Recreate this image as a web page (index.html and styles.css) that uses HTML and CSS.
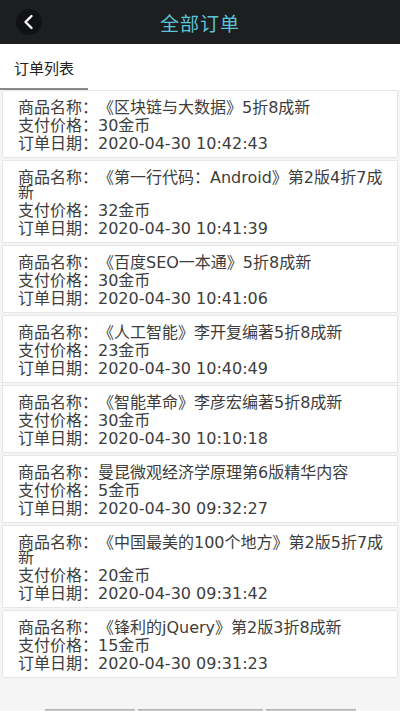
FILE: index.html
```html
<!DOCTYPE html>
<html lang="zh-CN">
<head>
	<meta charset="UTF-8" />
	<meta name="viewport" content="width=device-width, initial-scale=1.0" />
	<title>全部订单</title>
	<link rel="stylesheet" href="styles.css">
</head>
<body>
	<header class="topbar">
		<button class="back" aria-label="返回">
			<svg width="14" height="16" viewBox="0 0 14 16"><path d="M9.5 2 L3.5 8 L9.5 14" fill="none" stroke="#fff" stroke-width="2.4" stroke-linecap="round" stroke-linejoin="round"/></svg>
		</button>
		<h1>全部订单</h1>
	</header>

	<nav class="tabs">
		<span class="tab active">订单列表</span>
	</nav>

	<main class="orders">
		<div class="order">
			<p>商品名称：《区块链与大数据》5折8成新</p>
			<p>支付价格：30金币</p>
			<p>订单日期：2020-04-30 10:42:43</p>
		</div>
		<div class="order">
			<p>商品名称：《第一行代码：Android》第2版4折7成新</p>
			<p>支付价格：32金币</p>
			<p>订单日期：2020-04-30 10:41:39</p>
		</div>
		<div class="order">
			<p>商品名称：《百度SEO一本通》5折8成新</p>
			<p>支付价格：30金币</p>
			<p>订单日期：2020-04-30 10:41:06</p>
		</div>
		<div class="order">
			<p>商品名称：《人工智能》李开复编著5折8成新</p>
			<p>支付价格：23金币</p>
			<p>订单日期：2020-04-30 10:40:49</p>
		</div>
		<div class="order">
			<p>商品名称：《智能革命》李彦宏编著5折8成新</p>
			<p>支付价格：30金币</p>
			<p>订单日期：2020-04-30 10:10:18</p>
		</div>
		<div class="order">
			<p>商品名称：曼昆微观经济学原理第6版精华内容</p>
			<p>支付价格：5金币</p>
			<p>订单日期：2020-04-30 09:32:27</p>
		</div>
		<div class="order">
			<p>商品名称：《中国最美的100个地方》第2版5折7成新</p>
			<p>支付价格：20金币</p>
			<p>订单日期：2020-04-30 09:31:42</p>
		</div>
		<div class="order">
			<p>商品名称：《锋利的jQuery》第2版3折8成新</p>
			<p>支付价格：15金币</p>
			<p>订单日期：2020-04-30 09:31:23</p>
		</div>
	</main>

	<footer class="pager">
		<span class="btn small"></span>
		<span class="btn wide"></span>
		<span class="btn small"></span>
	</footer>
</body>
</html>
```

FILE: styles.css
```css
body {
	margin: 0;
	background: #f5f5f5;
	font-family: "Noto Sans CJK SC", "Noto Sans", sans-serif;
	color: #333;
	text-spacing-trim: space-all;
}

.topbar {
	height: 44px;
	background: #1d1e20;
	display: flex;
	align-items: center;
	justify-content: center;
	position: relative;
}

.topbar h1 {
	margin: 0;
	font-size: 19px;
	font-weight: normal;
	color: #5cc4d8;
	letter-spacing: 1px;
}

.back {
	position: absolute;
	left: 16px;
	top: 9px;
	width: 26px;
	height: 26px;
	border: 0;
	padding: 0;
	border-radius: 50%;
	background: #111214;
	display: flex;
	align-items: center;
	justify-content: center;
}

.tabs {
	background: #fff;
	height: 46px;
	display: flex;
	align-items: stretch;
}

.tab {
	width: 88px;
	display: flex;
	align-items: center;
	justify-content: center;
	font-size: 15px;
	color: #222;
	box-sizing: border-box;
	padding-top: 2px;
}

.tab.active {
	border-bottom: 2px solid #8a8a8a;
}

.orders {
	display: flex;
	flex-direction: column;
	gap: 2px;
	padding: 0 2px;
}

.order {
	background: #fff;
	border: 1px solid #e6e6e6;
	padding: 7px 4px 5px 15px;
}

.order p {
	margin: 0;
	padding: 1.5px 0;
	font-family: "DejaVu Sans", "Noto Sans CJK SC", sans-serif;
	font-size: 16px;
	line-height: 15px;
	color: #3d3d3d;
}

.pager {
	display: flex;
	justify-content: center;
	gap: 3px;
	padding-top: 31px;
}

.btn {
	height: 10px;
	background: #c9c9c9;
	border-top: 1px solid #b5b5b5;
}

.btn.small {
	width: 90px;
}

.btn.wide {
	width: 125px;
}
```
